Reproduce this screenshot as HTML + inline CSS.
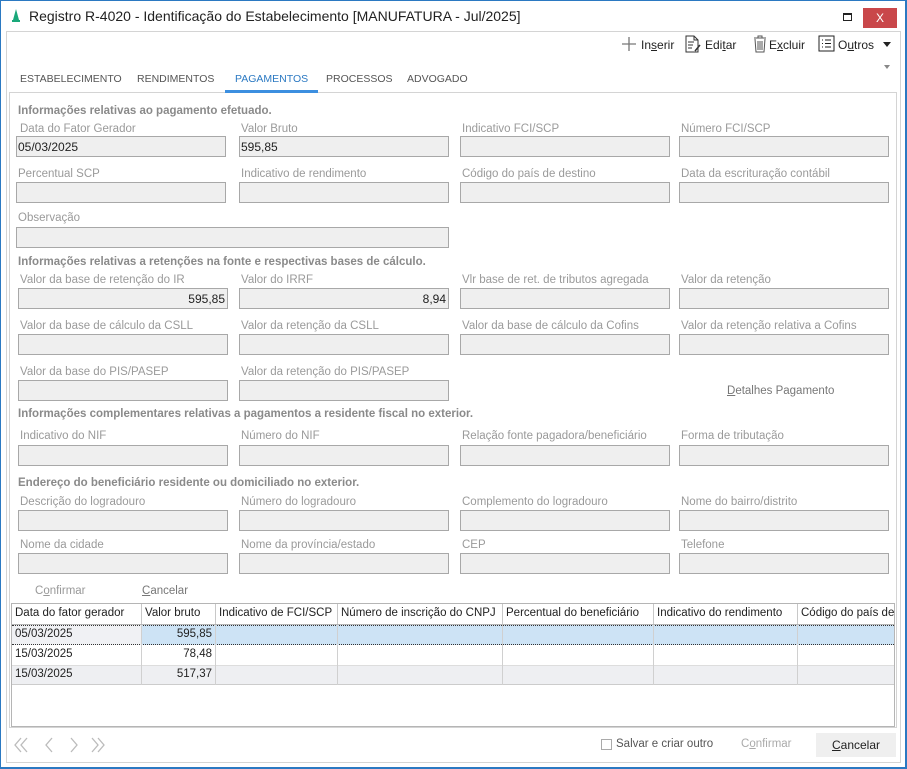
<!DOCTYPE html>
<html><head><meta charset="utf-8"><style>
*{box-sizing:border-box;margin:0;padding:0}
body{width:907px;height:769px;background:#fff;font-family:"Liberation Sans",sans-serif;font-size:12px;position:relative;overflow:hidden;color:#222}
div,span{position:absolute;white-space:nowrap}
.l{color:#9a9a9a;font-size:11.5px;margin-top:1px}
.h{color:#8a8a8a;font-weight:bold;font-size:11.5px;margin-top:1px}
.f{background:#efefef;border:1px solid #a8a8a8;height:21px;width:210px}
.v{color:#222;font-size:12px;top:3px}
.tab{top:73px;color:#555;font-size:10.5px}
.th{top:0;height:20px;border-right:1px solid #c8c8c8;padding:3px 3px;font-size:11.5px;color:#222}
.td{height:20px;border-right:1px solid #d0d0d0;padding:3px 3px;font-size:11.5px}
u{text-decoration:underline}
</style></head><body>
<div style="left:0;top:0;width:907px;height:769px;border:2px solid #2b79c2;border-top:1px solid #2b79c2;border-left:1px solid #2b79c2"></div>
<svg style="position:absolute;left:9px;top:9px" width="14" height="14"><polygon points="7,0 10,11 4,11" fill="#1aa87a"/><rect x="3" y="11" width="8" height="2" fill="#1aa87a"/></svg>
<div style="left:29px;top:8px;font-size:14px;color:#222">Registro R-4020 - Identificação do Estabelecimento [MANUFATURA - Jul/2025]</div>
<div style="left:843px;top:13px;width:9px;height:8px;border:1px solid #222;border-top-width:2px"></div>
<div style="left:863px;top:8px;width:34px;height:20px;background:#c9474a;color:#fff;text-align:center;font-size:12px;line-height:20px">X</div>
<div style="left:6px;top:31px;width:895px;height:732px;border:1px solid #d4d4d4"></div>
<svg style="position:absolute;left:621px;top:36px" width="16" height="16"><path d="M8 1V15M1 8H15" stroke="#777" stroke-width="1.3"/></svg>
<div style="left:641px;top:38px;color:#222">In<u>s</u>erir</div>
<svg style="position:absolute;left:684px;top:34px" width="18" height="20"><path d="M2 2H10L14 6V18H2Z M10 2V6H14 M4 8H10M4 11H9M4 14H8" fill="none" stroke="#333" stroke-width="1"/><path d="M11 17L16 11" stroke="#333" stroke-width="1.5"/></svg>
<div style="left:705px;top:38px;color:#222">Edi<u>t</u>ar</div>
<svg style="position:absolute;left:752px;top:34px" width="16" height="20"><path d="M2 4H14M6 4V2H10V4M3 5L4 18H12L13 5M6 7V16M8 7V16M10 7V16" fill="none" stroke="#555" stroke-width="1"/></svg>
<div style="left:769px;top:38px;color:#222">E<u>x</u>cluir</div>
<svg style="position:absolute;left:818px;top:35px" width="17" height="17"><rect x="1" y="1" width="15" height="15" fill="none" stroke="#222"/><path d="M4 5H5M4 8.5H5M4 12H5M7 5H13M7 8.5H13M7 12H13" stroke="#222"/></svg>
<div style="left:838px;top:38px;color:#222">O<u>u</u>tros</div>
<svg style="position:absolute;left:883px;top:42px" width="9" height="6"><polygon points="0,0 8,0 4,5" fill="#222"/></svg>
<svg style="position:absolute;left:884px;top:65px" width="7" height="5"><polygon points="0,0 6,0 3,4" fill="#888"/></svg>
<div class="tab" style="left:20px">ESTABELECIMENTO</div>
<div class="tab" style="left:137px">RENDIMENTOS</div>
<div class="tab" style="left:235px;color:#2b79c2">PAGAMENTOS</div>
<div class="tab" style="left:326px">PROCESSOS</div>
<div class="tab" style="left:407px">ADVOGADO</div>
<div style="left:9px;top:92px;width:888px;height:636px;border:1px solid #d4d4d4"></div>
<div style="left:225px;top:90px;width:93px;height:3px;background:#3c8fe0"></div>

<div class="h" style="left:18px;top:104px">Informações relativas ao pagamento efetuado.</div>
<div class="l" style="left:20px;top:122px">Data do Fator Gerador</div>
<div class="l" style="left:241px;top:122px">Valor Bruto</div>
<div class="l" style="left:462px;top:122px">Indicativo FCI/SCP</div>
<div class="l" style="left:681px;top:122px">Número FCI/SCP</div>
<div class="f" style="left:16px;top:136px"><span class="v" style="left:1px">05/03/2025</span></div>
<div class="f" style="left:239px;top:136px"><span class="v" style="left:1px">595,85</span></div>
<div class="f" style="left:460px;top:136px"></div>
<div class="f" style="left:679px;top:136px"></div>

<div class="l" style="left:18px;top:167px">Percentual SCP</div>
<div class="l" style="left:241px;top:167px">Indicativo de rendimento</div>
<div class="l" style="left:462px;top:167px">Código do país de destino</div>
<div class="l" style="left:681px;top:167px">Data da escrituração contábil</div>
<div class="f" style="left:16px;top:182px"></div>
<div class="f" style="left:239px;top:182px"></div>
<div class="f" style="left:460px;top:182px"></div>
<div class="f" style="left:679px;top:182px"></div>

<div class="l" style="left:18px;top:211px">Observação</div>
<div class="f" style="left:16px;top:227px;width:433px"></div>

<div class="h" style="left:18px;top:255px">Informações relativas a retenções na fonte e respectivas bases de cálculo.</div>
<div class="l" style="left:20px;top:273px">Valor da base de retenção do IR</div>
<div class="l" style="left:241px;top:273px">Valor do IRRF</div>
<div class="l" style="left:462px;top:273px">Vlr base de ret. de tributos agregada</div>
<div class="l" style="left:681px;top:273px">Valor da retenção</div>
<div class="f" style="left:18px;top:288px"><span class="v" style="right:2px">595,85</span></div>
<div class="f" style="left:239px;top:288px"><span class="v" style="right:2px">8,94</span></div>
<div class="f" style="left:460px;top:288px"></div>
<div class="f" style="left:679px;top:288px"></div>

<div class="l" style="left:20px;top:319px">Valor da base de cálculo da CSLL</div>
<div class="l" style="left:241px;top:319px">Valor da retenção da CSLL</div>
<div class="l" style="left:462px;top:319px">Valor da base de cálculo da Cofins</div>
<div class="l" style="left:681px;top:319px">Valor da retenção relativa a Cofins</div>
<div class="f" style="left:18px;top:334px"></div>
<div class="f" style="left:239px;top:334px"></div>
<div class="f" style="left:460px;top:334px"></div>
<div class="f" style="left:679px;top:334px"></div>

<div class="l" style="left:20px;top:365px">Valor da base do PIS/PASEP</div>
<div class="l" style="left:241px;top:365px">Valor da retenção do PIS/PASEP</div>
<div class="f" style="left:18px;top:380px"></div>
<div class="f" style="left:239px;top:380px"></div>
<div class="l" style="left:727px;top:384px;color:#777"><u>D</u>etalhes Pagamento</div>

<div class="h" style="left:18px;top:407px">Informações complementares relativas a pagamentos a residente fiscal no exterior.</div>
<div class="l" style="left:20px;top:429px">Indicativo do NIF</div>
<div class="l" style="left:241px;top:429px">Número do NIF</div>
<div class="l" style="left:462px;top:429px">Relação fonte pagadora/beneficiário</div>
<div class="l" style="left:681px;top:429px">Forma de tributação</div>
<div class="f" style="left:18px;top:445px"></div>
<div class="f" style="left:239px;top:445px"></div>
<div class="f" style="left:460px;top:445px"></div>
<div class="f" style="left:679px;top:445px"></div>

<div class="h" style="left:18px;top:476px">Endereço do beneficiário residente ou domiciliado no exterior.</div>
<div class="l" style="left:20px;top:495px">Descrição do logradouro</div>
<div class="l" style="left:241px;top:495px">Número do logradouro</div>
<div class="l" style="left:462px;top:495px">Complemento do logradouro</div>
<div class="l" style="left:681px;top:495px">Nome do bairro/distrito</div>
<div class="f" style="left:18px;top:510px"></div>
<div class="f" style="left:239px;top:510px"></div>
<div class="f" style="left:460px;top:510px"></div>
<div class="f" style="left:679px;top:510px"></div>

<div class="l" style="left:20px;top:538px">Nome da cidade</div>
<div class="l" style="left:241px;top:538px">Nome da província/estado</div>
<div class="l" style="left:462px;top:538px">CEP</div>
<div class="l" style="left:681px;top:538px">Telefone</div>
<div class="f" style="left:18px;top:553px"></div>
<div class="f" style="left:239px;top:553px"></div>
<div class="f" style="left:460px;top:553px"></div>
<div class="f" style="left:679px;top:553px"></div>

<div class="l" style="left:35px;top:584px;color:#999">C<u>o</u>nfirmar</div>
<div class="l" style="left:142px;top:584px;color:#777"><u>C</u>ancelar</div>

<div style="left:11px;top:603px;width:884px;height:124px;border:1px solid #b5b5b5;overflow:hidden">
 <div style="left:0;top:0;width:884px;height:21px;border-bottom:1px solid #b5b5b5"></div>
 <div class="th" style="left:0;width:130px">Data do fator gerador</div>
 <div class="th" style="left:130px;width:74px">Valor bruto</div>
 <div class="th" style="left:204px;width:122px">Indicativo de FCI/SCP</div>
 <div class="th" style="left:326px;width:165px">Número de inscrição do CNPJ</div>
 <div class="th" style="left:491px;width:151px">Percentual do beneficiário</div>
 <div class="th" style="left:642px;width:144px">Indicativo do rendimento</div>
 <div class="th" style="left:786px;width:120px;border:none">Código do país de</div>
 <div style="left:0;top:21px;width:884px;height:20px;background:#cde3f5;border-top:1px dotted #333;border-bottom:1px dotted #333"></div>
 <div style="left:0;top:21px;width:130px;height:20px;background:#f0f1f4;border-top:1px dotted #333;border-bottom:1px dotted #333"></div>
 <div class="td" style="left:0;top:21px;width:130px">05/03/2025</div>
 <div class="td" style="left:130px;top:21px;width:74px;text-align:right">595,85</div>
 <div class="td" style="left:0;top:41px;width:130px">15/03/2025</div>
 <div class="td" style="left:130px;top:41px;width:74px;text-align:right">78,48</div>
 <div style="left:0;top:61px;width:884px;height:20px;background:#eeeff2;border-top:1px solid #ddd;border-bottom:1px solid #ccc"></div>
 <div class="td" style="left:0;top:61px;width:130px">15/03/2025</div>
 <div class="td" style="left:130px;top:61px;width:74px;text-align:right">517,37</div>
 <div style="left:325px;top:21px;height:60px;border-left:1px solid #d0d0d0"></div>
 <div style="left:490px;top:21px;height:60px;border-left:1px solid #d0d0d0"></div>
 <div style="left:641px;top:21px;height:60px;border-left:1px solid #d0d0d0"></div>
 <div style="left:785px;top:21px;height:60px;border-left:1px solid #d0d0d0"></div>
 <div style="left:203px;top:41px;height:40px;border-left:1px solid #d0d0d0"></div>
</div>

<svg style="position:absolute;left:12px;top:736px" width="100" height="18"><g fill="none" stroke="#bbb" stroke-width="1.3"><path d="M9 2L3 9L9 16M15 2L9 9L15 16M40 2L34 9L40 16M59 2L65 9L59 16M80 2L86 9L80 16M86 2L92 9L86 16"/></g></svg>
<div style="left:601px;top:739px;width:11px;height:11px;border:1px solid #aaa"></div>
<div style="left:616px;top:738px;color:#555;font-size:11.5px">Salvar e criar outro</div>
<div style="left:741px;top:738px;color:#aaa;font-size:11.5px">C<u>o</u>nfirmar</div>
<div style="left:816px;top:733px;width:80px;height:24px;background:#efefef;text-align:center;line-height:24px;font-size:12px;color:#222"><u>C</u>ancelar</div>
</body></html>
